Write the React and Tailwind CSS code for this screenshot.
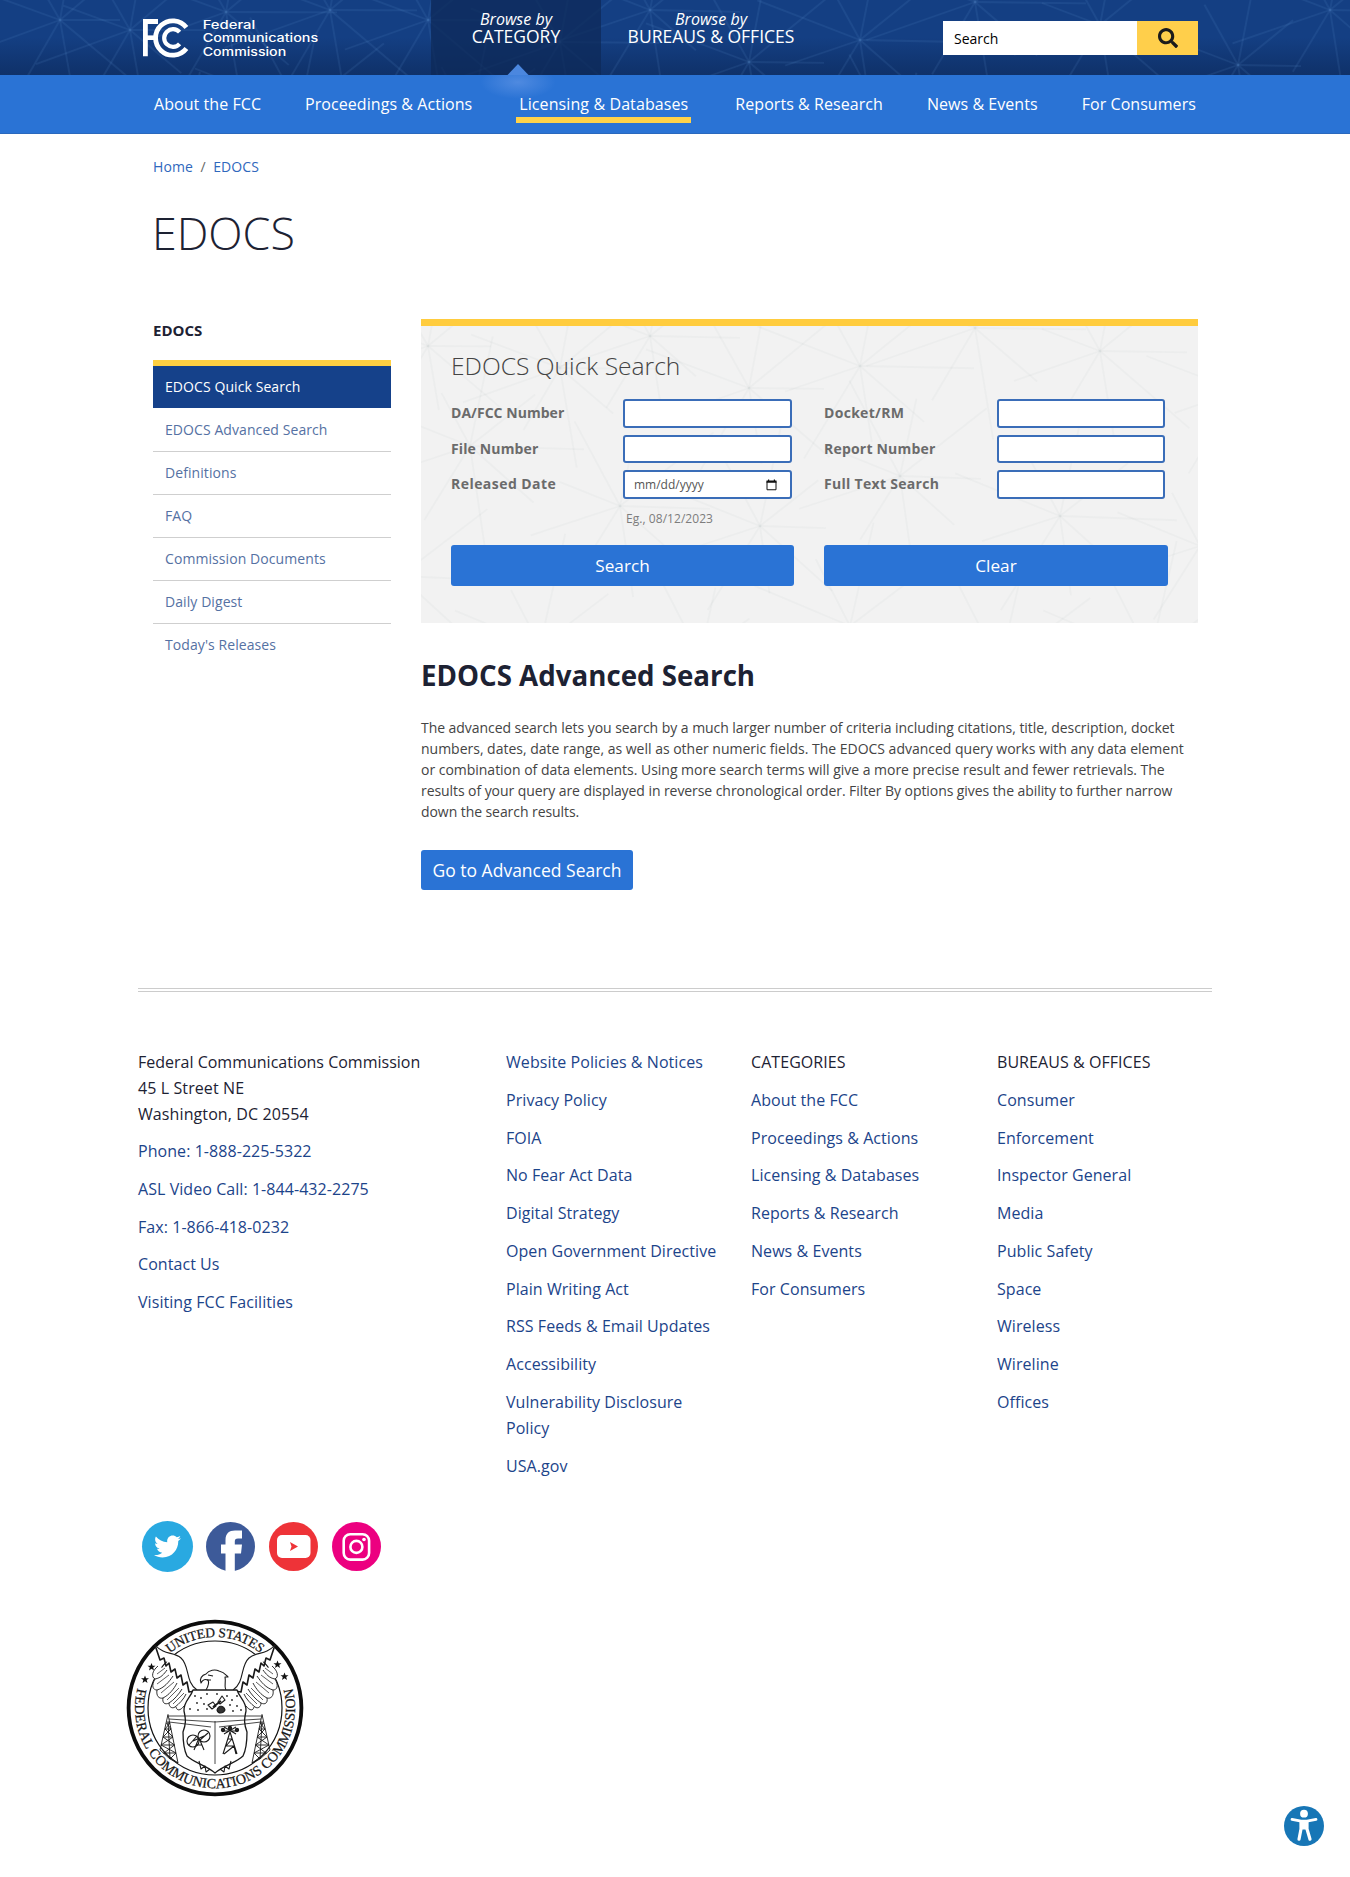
import React from "react";
import { FaSearch, FaTwitter } from "react-icons/fa";

const burstNodes = [
  [60, 20], [130, 30], [226, 12], [330, 10], [428, 20], [560, 42], [749, 62], [975, 2], [1100, 25],
  [1238, 65], [1330, 10], [860, 40], [650, 10], [45, 160], [180, 170], [300, 110], [470, 120],
  [620, 180], [760, 200], [900, 150], [1060, 190], [1200, 220], [90, 290], [260, 280], [400, 250],
  [540, 320], [700, 330], [850, 300], [1000, 340], [1150, 330], [1320, 180],
];

function Web({ id, color, opacity, shift }) {
  const lines = [];
  burstNodes.forEach((a, i) => {
    for (let k = 0; k < 9; k++) {
      const t = k * 0.698 + i * 0.7;
      const r = 60 + ((i * 7 + k * 31) % 60);
      lines.push([a[0], a[1], a[0] + r * Math.cos(t), a[1] + r * Math.sin(t)]);
    }
  });
  return (
    <svg className="absolute inset-0 h-full w-full" aria-hidden="true">
      <defs>
        <pattern id={id} x={shift} width="1350" height="370" patternUnits="userSpaceOnUse">
          <g stroke={color} strokeOpacity={opacity} strokeWidth="1.8">
            {lines.map((l, i) => (
              <line key={i} x1={l[0]} y1={l[1]} x2={l[2]} y2={l[3]} />
            ))}
          </g>
        </pattern>
      </defs>
      <rect width="100%" height="100%" fill={`url(#${id})`} />
    </svg>
  );
}

function Logo() {
  return (
    <svg width="180" height="42" viewBox="141 17 180 42" className="block">
      <g fill="none" stroke="#fff">
        <path d="M145.4 56.2V21.5H158" strokeWidth="4.8" />
        <path d="M147 37.7H155" strokeWidth="4.6" />
        <path d="M186.4 27.5A17.2 17.2 0 1 0 186.4 48.5" strokeWidth="4.8" />
        <path d="M179.6 32.2A8.8 8.8 0 1 0 179.6 43.8" strokeWidth="4.2" />
      </g>
      <g fill="#fff" fontFamily="Inter, sans-serif" fontSize="11.4" fontWeight="500">
        <text x="202.7" y="29" textLength="52.5" lengthAdjust="spacingAndGlyphs">Federal</text>
        <text x="202.7" y="42.4" textLength="115.5" lengthAdjust="spacingAndGlyphs">Communications</text>
        <text x="202.7" y="55.8" textLength="83.5" lengthAdjust="spacingAndGlyphs">Commission</text>
      </g>
    </svg>
  );
}

function Header() {
  return (
    <header className="relative h-[75px] bg-linear-to-b from-[#143f83] via-[#143f83] to-[#0f3169]">
      <Web id="webDark" color="#5d8fd0" opacity="0.13" shift={0} />
      <div className="relative flex h-full pl-[141px]">
        <div className="w-[290px] pt-[17px]">
          <Logo />
        </div>
        <div className="relative w-[170px] bg-[#0e2a58]/75 pt-[10px] text-center text-white">
          <div className="text-[16px] leading-[18px] italic">Browse by</div>
          <div className="text-[17.5px] leading-[17px]">CATEGORY</div>
          <svg className="absolute bottom-0 left-[75px]" width="24" height="12" viewBox="0 0 24 12">
            <path d="M12 1L22.5 12H1.5Z" fill="#4b87df" />
          </svg>
        </div>
        <div className="w-[220px] pt-[10px] text-center text-white">
          <div className="text-[16px] leading-[18px] italic">Browse by</div>
          <div className="text-[17.5px] leading-[17px]">BUREAUS &amp; OFFICES</div>
        </div>
        <div className="mt-[21px] ml-[122px] flex h-[34px] w-[255px]">
          <div className="flex flex-1 items-center bg-white pl-[11px] text-[14px] text-black">Search</div>
          <div className="flex w-[61px] items-center justify-center bg-[#ffcf4b]">
            <FaSearch size={20} color="#1b1b1b" />
          </div>
        </div>
      </div>
    </header>
  );
}

function Nav() {
  const items = ["About the FCC", "Proceedings & Actions", "Licensing & Databases", "Reports & Research", "News & Events", "For Consumers"];
  return (
    <nav className="relative h-[59px] border-b border-[#2a68bd] bg-[#2a73d5]">
      <div className="absolute top-0 left-[480px] h-[24px] w-[76px] bg-radial-[at_50%_30%] from-[#4f8ae0] to-70% to-transparent" />
      <div className="relative mx-auto flex h-full w-[1042px] items-center justify-between text-[16px] tracking-[0.06px] text-white">
        {items.map((t, i) => (
          <div key={t} className={i === 2 ? "flex h-[48px] items-center self-start border-b-[6px] border-[#ffd24a] px-[3px] pt-[15px] tracking-[0.1px]" : ""}>
            {t}
          </div>
        ))}
      </div>
    </nav>
  );
}

function Sidebar() {
  const items = ["EDOCS Advanced Search", "Definitions", "FAQ", "Commission Documents", "Daily Digest", "Today's Releases"];
  return (
    <aside className="w-[238px] text-[14px]">
      <div className="h-[41px] text-[15px] leading-[22px] font-bold text-[#1d2233]">EDOCS</div>
      <div className="h-[48px] border-t-[6px] border-[#ffd042] bg-[#15418a] pl-[12px] leading-[42px] tracking-[0.08px] text-white">EDOCS Quick Search</div>
      {items.map((t, i) => (
        <div key={t} className="h-[43px]">
          <div className={`h-[44px] pl-[12px] leading-[43px] tracking-[0.08px] text-[#5571a3] ${i < 5 ? "border-b border-[#cfcfcf]" : ""}`}>{t}</div>
        </div>
      ))}
    </aside>
  );
}

function Field({ label, children, height, labelWidth, tracking }) {
  return (
    <div className={`flex items-center ${height}`}>
      <div className={`pb-[2px] text-[14px] font-bold text-[#6b6b6b] ${labelWidth} ${tracking}`}>{label}</div>
      <div className="flex h-full min-w-0 flex-1 items-center justify-between rounded-[3px] border-2 border-[#3a6db8] bg-white pr-[13px] pl-[9px] text-[12px] text-[#555]">{children}</div>
    </div>
  );
}

function QuickSearch() {
  return (
    <section className="relative h-[304px] border-t-[7px] border-[#ffcc3e] bg-[#f2f2f2]">
      <Web id="webLight" color="#8a8f9a" opacity="0.06" shift={-421} />
      <div className="relative px-[30px] pt-[23px]">
        <h2 className="text-[24.6px] leading-[34px] font-light text-[#444]">EDOCS Quick Search</h2>
        <div className="mt-[16px] grid grid-cols-[341px_341px] gap-x-[32px]">
          <div className="flex flex-col gap-[7px]">
            <Field label="DA/FCC Number" height="h-[29px]" labelWidth="w-[172px]" tracking="tracking-[0.04px]" />
            <Field label="File Number" height="h-[28px]" labelWidth="w-[172px]" tracking="tracking-[0.13px]" />
            <Field label="Released Date" height="h-[29px]" labelWidth="w-[172px]" tracking="tracking-[0.45px]">
              <span>mm/dd/yyyy</span>
              <svg width="11" height="12" viewBox="0 0 11 12">
                <path d="M1 2.5H10V10.75H1Z" fill="none" stroke="#111" strokeWidth="1" />
                <path d="M0.5 1.5H10.5V3.8H0.5ZM2 0.4H3.2V2H2ZM7.8 0.4H9V2H7.8Z" fill="#111" />
              </svg>
            </Field>
          </div>
          <div className="flex flex-col gap-[7px]">
            <Field label="Docket/RM" height="h-[29px]" labelWidth="w-[173px]" tracking="tracking-[0.3px]" />
            <Field label="Report Number" height="h-[28px]" labelWidth="w-[173px]" tracking="tracking-[0.2px]" />
            <Field label="Full Text Search" height="h-[29px]" labelWidth="w-[173px]" tracking="tracking-[0.3px]" />
          </div>
        </div>
        <div className="mt-[12px] pl-[175px] text-[12px] leading-[16px] tracking-[0.05px] text-[#7d7d7d]">Eg., 08/12/2023</div>
        <div className="mt-[18px] grid grid-cols-[343px_344px] gap-x-[30px]">
          <div className="h-[41px] rounded-[3px] bg-[#2a73d5] text-center text-[17.2px] leading-[41px] text-white">Search</div>
          <div className="h-[41px] rounded-[3px] bg-[#2a73d5] text-center text-[17.2px] leading-[41px] text-white">Clear</div>
        </div>
      </div>
    </section>
  );
}

function LinkList({ heading, items, width }) {
  return (
    <div className={`flex flex-col gap-[11.75px] tracking-[0.06px] ${width}`}>
      {heading && <div className="text-[#1d2233]">{heading}</div>}
      {items.map((t) => (
        <div key={t} className="text-[#1c448a]">{t}</div>
      ))}
    </div>
  );
}

function Tower({ x, flip }) {
  return (
    <g transform={`translate(${x} 9) scale(${flip} 1)`} strokeWidth="0.9">
      <path d="M0 -2.5L-8 33M0 -2.5L10 46M0 4L2 42M-1.5 6H2M-3 12L2 6M3 12L-1.5 6M-3 12H3M-5 20L3 12M5 20L-3 12M-5 20H5M-7 28L5 20M6.5 28L-5 20M-7 28H6.5M-4 36L6.5 28M8 36L-7 28M-5 36H8M2 42L8 36M10 46L-4 36M-8 33L2 42L10 46" />
    </g>
  );
}

function Wing() {
  return (
    <g>
      <path d="M-57 -42C-63 -37 -64 -31 -60 -29C-54 -30 -51 -34 -48 -38M-60 -29C-64 -22 -62 -18 -58 -18C-51 -20 -46 -26 -42 -32M-58 -18C-59 -12 -56 -9 -52 -10C-46 -13 -41 -19 -38 -25M-52 -10C-53 -5 -50 -3 -46 -5C-41 -8 -36 -14 -33 -19M-46 -5C-46 -1 -43 1 -40 -1C-36 -4 -31 -9 -29 -14M-39 -1C-38 3 -35 3 -31 -2" strokeWidth="0.9" />
      <path d="M-58 -34L-50 -40M-58 -24L-46 -33M-54 -15L-41 -26M-48 -8L-36 -20M-42 -4L-31 -15" strokeWidth="0.7" />
      <path d="M-60 -63C-50 -52 -42 -57 -34 -50C-25 -42 -30 -26 -18 -18L-20 -17L-27 -14L-28 -23L-36 -26L-38 -36L-46 -37L-47 -46L-55 -48Z" stroke="none" />
      <path d="M-60 -63C-50 -52 -42 -57 -34 -50C-25 -42 -30 -26 -18 -18" fill="none" />
      <path d="M-60 -63L-55 -48L-51 -50L-49 -42L-46 -45L-44 -36L-40 -39L-38 -30L-34 -33L-32 -23L-28 -26L-26 -16L-20 -17" strokeWidth="1.6" fill="none" />
    </g>
  );
}

function Seal() {
  const star = "M0 -4L1.1 -1.3L4 -1.2L1.7 0.6L2.5 3.4L0 1.8L-2.5 3.4L-1.7 0.6L-4 -1.2L-1.1 -1.3Z";
  const dots = [[-20, -12], [-14, -10], [-8, -14], [-18, -5], [-11, -4], [-25, 1], [-17, 2], [-8, 1], [12, -12], [17, -8], [22, -12], [15, -3], [22, -2], [26, 2], [18, 3], [2, -14]];
  return (
    <svg width="180" height="180" viewBox="-90 -90 180 180" className="block">
      <defs>
        <path id="sealTop" d="M-71 0A71 71 0 0 1 71 0" />
        <path id="sealBottom" d="M-70.5 -37.5A80 80 0 1 0 70.5 -37.5" />
      </defs>
      <circle r="86.4" fill="#fff" stroke="#0c0c0c" strokeWidth="3.8" />
      <circle r="67" fill="none" stroke="#111" strokeWidth="1.2" />
      <g fill="#161616" stroke="#161616" strokeWidth="0.25" fontFamily="Liberation Serif, serif">
        <text fontSize="13.5">
          <textPath href="#sealTop" startOffset="50%" textAnchor="middle" textLength="98">UNITED STATES</textPath>
        </text>
        <text fontSize="14">
          <textPath href="#sealBottom" startOffset="50%" textAnchor="middle" textLength="292">FEDERAL COMMUNICATIONS COMMISSION</textPath>
        </text>
      </g>
      {[[-63.5, -41], [-70, -28.5], [62.5, -43.5], [69.5, -31.5]].map(([x, y]) => (
        <path key={x} d={star} transform={`translate(${x} ${y})`} fill="#111" />
      ))}
      <g fill="#fff" stroke="#1a1a1a" strokeWidth="1.1" strokeLinejoin="round">
        <Wing />
        <g transform="scale(-1 1)">
          <Wing />
        </g>
        <path d="M-9 -18C-6 -23 -6 -26 -7 -28C-10 -29 -12 -29 -14 -25C-16 -29 -13 -33 -9 -34C-6 -38 0 -39 4 -37C9 -36 11 -33 13 -31L10 -31C11 -26 9 -21 11 -18" />
        <path d="M-7 -33L-2 -32M-8 -28H-4" />
        <path d="M-22 -18H22C24 -11 32 -6 31 3C29 12 29 16 32 24C32 34 31 42 28 48C21 55 9 57 0 65C-9 57 -21 55 -28 48C-31 42 -32 34 -32 24C-29 16 -29 12 -31 3C-32 -6 -24 -11 -22 -18Z" strokeWidth="1.3" />
        <path d="M-46 8H46M-46 11L0 14L46 11M0 13V56M-46 14L-4 19M46 14L4 19" strokeWidth="0.8" fill="none" />
        <g fill="none">
          <Tower x={-47} flip={1} />
          <Tower x={47} flip={-1} />
        </g>
        <g strokeWidth="1.1">
          <path d="M-3 1L-7 -3L-2 -6L1 -2ZM3 -6L7 -12L10 -8L5 -4Z" />
          <path d="M-2 -1L6 -7" strokeWidth="1.8" />
          <path d="M2 2C4 -4 9 -2 10 2C8 6 3 6 2 2Z" fill="#333" />
          <circle cx="-22" cy="33" r="6" />
          <circle cx="-11" cy="28" r="6" />
          <path d="M-26 37L-18 28M-15 32L-7 25M-16 30L-21 42M-16 30L-11 42M-19 37H-13M-22 33L-11 28" />
          <path d="M15 24L8 46M15 24L22 46M13 31H17L11 38H19L9 46M19 38L21 46M8 23H22M9 26L21 19M9 19L21 26" />
          <circle cx="8" cy="22" r="1.6" fill="#222" />
          <circle cx="22" cy="22" r="1.6" fill="#222" />
          <circle cx="15" cy="20" r="1.6" fill="#222" />
        </g>
        <path d="M-16 53L-14 61L-10 58L-9 64L-5 61M16 53L14 61L10 58L9 64L5 61" fill="none" />
      </g>
      {dots.map(([x, y], i) => (
        <circle key={i} cx={x} cy={y} r="0.9" fill="#222" />
      ))}
    </svg>
  );
}

function Social() {
  return (
    <div className="flex h-[51px] items-center pl-[4px]">
      <div className="flex h-[51px] w-[51px] items-center justify-center rounded-full bg-[#29a9e1]">
        <FaTwitter size={27} color="#fff" />
      </div>
      <svg className="ml-[13px]" width="49" height="49" viewBox="0 0 49 49">
        <circle cx="24.5" cy="24.5" r="24.5" fill="#3d5a99" />
        <path d="M19.5 49V31.5H15V22.5H19.5V18C19.5 11.5 23 8.5 29 8.5H36V16.5H32C29.5 16.5 28.8 17.5 28.8 19.5V22.5H36L35 31.5H28.8V49Z" fill="#fff" />
      </svg>
      <svg className="ml-[14px]" width="49" height="49" viewBox="0 0 49 49">
        <circle cx="24.5" cy="24.5" r="24.5" fill="#ee3338" />
        <rect x="8" y="13" width="33.5" height="23" rx="5" fill="#fff" />
        <path d="M21 20L29 24.5L21 29L22.5 24.5Z" fill="#ee3338" />
      </svg>
      <svg className="ml-[14px]" width="49" height="49" viewBox="0 0 49 49">
        <circle cx="24.5" cy="24.5" r="24.5" fill="#ec0080" />
        <g fill="none" stroke="#fff" strokeWidth="2.6">
          <rect x="11.7" y="12.2" width="25.4" height="25.4" rx="6.5" />
          <circle cx="24.4" cy="24.9" r="6" />
        </g>
        <circle cx="32" cy="17.5" r="1.8" fill="#fff" />
      </svg>
    </div>
  );
}

function Footer() {
  return (
    <footer className="mx-auto w-[1074px]">
      <div className="h-[4px] border-y border-[#cccccc]" />
      <div className="mt-[57px] flex h-[472px] text-[16px] leading-[26px]">
        <div className="w-[368px]">
          <div className="mb-[11px] text-[#1d2233]">
            Federal Communications Commission
            <br />
            <span className="tracking-[0.1px]">45 L Street NE</span>
            <br />
            <span className="tracking-[0.1px]">Washington, DC 20554</span>
          </div>
          <LinkList width="w-[350px]" items={["Phone: 1-888-225-5322", "ASL Video Call: 1-844-432-2275", "Fax: 1-866-418-0232", "Contact Us", "Visiting FCC Facilities"]} />
        </div>
        <div className="w-[245px]">
          <LinkList width="w-[215px]" items={["Website Policies & Notices", "Privacy Policy", "FOIA", "No Fear Act Data", "Digital Strategy", "Open Government Directive", "Plain Writing Act", "RSS Feeds & Email Updates", "Accessibility", "Vulnerability Disclosure Policy", "USA.gov"]} />
        </div>
        <div className="w-[246px]">
          <LinkList width="w-[215px]" heading="CATEGORIES" items={["About the FCC", "Proceedings & Actions", "Licensing & Databases", "Reports & Research", "News & Events", "For Consumers"]} />
        </div>
        <LinkList width="w-[215px]" heading="BUREAUS & OFFICES" items={["Consumer", "Enforcement", "Inspector General", "Media", "Public Safety", "Space", "Wireless", "Wireline", "Offices"]} />
      </div>
      <Social />
      <div className="mt-[46px] -ml-[13px]">
        <Seal />
      </div>
    </footer>
  );
}

export default function App() {
  return (
    <div className="relative h-[1877px] w-[1350px] overflow-hidden bg-white font-['Open_Sans',sans-serif]">
      <Header />
      <Nav />
      <div className="ml-[153px] w-[1045px]">
        <div className="flex gap-[7.5px] pt-[22px] text-[14px] leading-[21px] tracking-[0.1px] text-[#2f68bd]">
          <span>Home</span>
          <span className="text-[#666]">/</span>
          <span>EDOCS</span>
        </div>
        <h1 className="mt-[26px] -ml-px text-[44.8px] leading-[60px] font-light text-[#1d2233]">EDOCS</h1>
        <div className="mt-[56px] flex gap-[30px]">
          <Sidebar />
          <main className="h-[669px] w-[777px]">
            <QuickSearch />
            <h2 className="mt-[33px] text-[27.7px] leading-[38px] font-bold text-[#1d2233]">EDOCS Advanced Search</h2>
            <p className="mt-[23px] text-[14px] leading-[21px] text-[#444]">
              <span className="tracking-[-0.05px]">The advanced search lets you search by a much larger number of criteria including citations, title, description, docket </span>
              <span className="tracking-[-0.01px]">numbers, dates, date range, as well as other numeric fields. The EDOCS advanced query works with any data element </span>
              <span className="tracking-[-0.02px]">or combination of data elements. Using more search terms will give a more precise result and fewer retrievals. The </span>
              <span className="tracking-[-0.07px]">results of your query are displayed in reverse chronological order. Filter By options gives the ability to further narrow down the search results.</span>
            </p>
            <div className="mt-[28px] h-[40px] w-[212px] rounded-[3px] bg-[#2a73d5] text-center text-[17.5px] leading-[40px] text-white">Go to Advanced Search</div>
          </main>
        </div>
      </div>
      <Footer />
      <div className="absolute right-[26px] bottom-[31px]">
        <svg width="40" height="40" viewBox="0 0 40 40" className="block">
          <circle cx="20" cy="20" r="20" fill="#1776b6" />
          <circle cx="20" cy="7.7" r="3.9" fill="#fff" />
          <path d="M8 13.4L17 15.2H23L32 13.4" fill="none" stroke="#fff" strokeWidth="2.8" strokeLinecap="round" />
          <path d="M17 15.5V23L15 33.2M23 15.5V23L26 33.2" fill="none" stroke="#fff" strokeWidth="3.2" strokeLinecap="round" strokeLinejoin="round" />
          <path d="M16.5 15H23.5V23.5H16.5Z" fill="#fff" />
        </svg>
      </div>
    </div>
  );
}
